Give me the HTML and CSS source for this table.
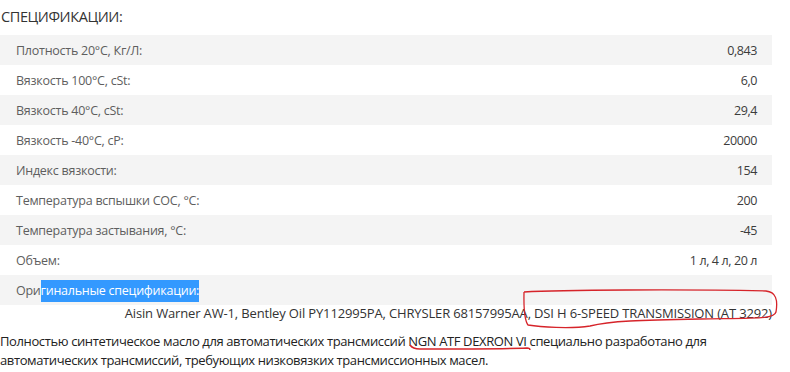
FILE: index.html
```html
<!DOCTYPE html>
<html lang="ru">
<head>
<meta charset="utf-8">
<link rel="stylesheet" href="styles.css">
</head>
<body>
<div class="page">
  <h2 class="title">СПЕЦИФИКАЦИИ:</h2>
  <div class="specs">
    <div class="row"><span class="label">Плотность 20°C, Кг/Л:</span><span class="value">0,843</span></div>
    <div class="row"><span class="label">Вязкость 100°C, cSt:</span><span class="value">6,0</span></div>
    <div class="row"><span class="label">Вязкость 40°C, cSt:</span><span class="value">29,4</span></div>
    <div class="row"><span class="label">Вязкость -40°C, cP:</span><span class="value">20000</span></div>
    <div class="row"><span class="label">Индекс вязкости:</span><span class="value">154</span></div>
    <div class="row"><span class="label">Температура вспышки COC, °C:</span><span class="value">200</span></div>
    <div class="row"><span class="label">Температура застывания, °C:</span><span class="value">-45</span></div>
    <div class="row"><span class="label">Объем:</span><span class="value">1 л, 4 л, 20 л</span></div>
    <div class="row"><span class="label">Ори<span class="sel">гинальные спецификации:</span></span></div>
  </div>
  <div class="orig">Aisin Warner AW-1, Bentley Oil PY112995PA, CHRYSLER 68157995AA, DSI H 6-SPEED TRANSMISSION (AT 3292)</div>
  <p class="desc">Полностью синтетическое масло для автоматических трансмиссий NGN ATF DEXRON VI специально разработано для автоматических трансмиссий, требующих низковязких трансмиссионных масел.</p>
  <svg class="marks" width="790" height="372" viewBox="0 0 790 372">
    <path d="M524 292 C560 290 680 289 766 291 C776 292 778 300 776 312 C774 319 760 318 700 319 C640 320 610 321 590 326 C570 329 540 327 528 325 C523 318 524 300 524 292" fill="none" stroke="#d6242a" stroke-width="1.3"/>
    <path d="M410 345 C412 348 415 349 420 349 C450 349 500 349 527 348 C529 348 530 349 530 350" fill="none" stroke="#d6242a" stroke-width="1.4"/>
  </svg>
</div>
</body>
</html>
```
FILE: styles.css
```css
html, body {
  margin: 0;
  padding: 0;
  background: #fff;
}
.page {
  position: relative;
  width: 790px;
  height: 372px;
  overflow: hidden;
  font-family: "Open Sans", "Noto Sans", sans-serif;
}
.title {
  margin: 0;
  height: 35px;
  padding-left: 1px;
  font-size: 14.5px;
  font-weight: 400;
  line-height: 33px;
  color: #333;
  letter-spacing: -0.4px;
}
.specs {
  width: 772px;
}
.row {
  display: flex;
  justify-content: space-between;
  align-items: center;
  height: 30px;
  padding: 0 15px 0 16px;
  font-size: 12.5px;
  letter-spacing: -0.25px;
}
.row:nth-child(odd) {
  background: #f4f4f4;
}
.label {
  color: #5e5e5e;
}
.value {
  color: #3c3c3c;
  letter-spacing: -0.4px;
}
.sel {
  background: #3399ff;
  color: #fff;
  padding: 2px 0 3px;
}
.orig {
  width: 772px;
  text-align: right;
  font-size: 13px;
  color: #333;
  letter-spacing: -0.15px;
  line-height: 18px;
  margin-top: -1px;
}
.desc {
  margin: 10px 0 0;
  font-size: 13px;
  line-height: 19px;
  color: #222;
  letter-spacing: -0.38px;
  width: 760px;
}
.marks {
  position: absolute;
  left: 0;
  top: 0;
  pointer-events: none;
}
```
